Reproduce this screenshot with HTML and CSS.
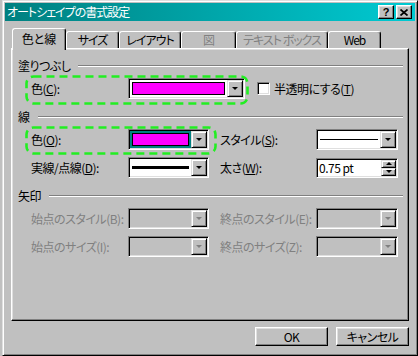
FILE: index.html
```html
<!DOCTYPE html>
<html lang="ja">
<head>
  <meta charset="UTF-8">
  <title>オートシェイプの書式設定</title>
  <link rel="stylesheet" href="styles.css">
</head>
<body>
  <div class="window">
    <div class="titlebar">
      <span class="title">オートシェイプの書式設定</span>
      <span class="cap-btn">?</span>
      <span class="cap-btn">
        <svg width="8" height="7" viewBox="0 0 8 7"><path d="M0.5 0.5L7.5 6.5M7.5 0.5L0.5 6.5" stroke="#000" stroke-width="1.7"/></svg>
      </span>
    </div>

    <div class="tabs">
      <div class="tab active">色と線</div>
      <div class="tab">サイズ</div>
      <div class="tab">レイアウト</div>
      <div class="tab off">図</div>
      <div class="tab off">テキスト ボックス</div>
      <div class="tab">Web</div>
    </div>

    <div class="panel">
      <div class="group-head"><span>塗りつぶし</span><i class="etch"></i></div>
      <div class="row">
        <div class="hl hl-fill">
          <svg class="hl-box"><rect/></svg>
          <span class="lbl">色(<u>C</u>):</span>
          <div class="combo combo-wide">
            <div class="combo-val"><span class="swatch"></span></div>
            <span class="drop"><i class="tri"></i></span>
          </div>
        </div>
        <span class="check"></span>
        <span>半透明にする(<u>T</u>)</span>
      </div>

      <div class="group-head"><span>線</span><i class="etch"></i></div>
      <div class="row">
        <div class="hl hl-line">
          <svg class="hl-box"><rect/></svg>
          <span class="lbl">色(<u>O</u>):</span>
          <div class="combo">
            <div class="combo-val focused"><span class="swatch"></span></div>
            <span class="drop"><i class="tri"></i></span>
          </div>
        </div>
        <span class="lbl lbl-2">スタイル(<u>S</u>):</span>
        <div class="combo combo-2">
          <div class="combo-val"><span class="stroke thin"></span></div>
          <span class="drop"><i class="tri"></i></span>
        </div>
      </div>
      <div class="row">
        <span class="lbl">実線/点線(<u>D</u>):</span>
        <div class="combo">
          <div class="combo-val"><span class="stroke thick"></span></div>
          <span class="drop"><i class="tri"></i></span>
        </div>
        <span class="lbl lbl-2">太さ(<u>W</u>):</span>
        <div class="spin">
          <div class="spin-val">0.75 pt</div>
          <div class="spin-btns">
            <span><i class="tri up"></i></span>
            <span><i class="tri"></i></span>
          </div>
        </div>
      </div>

      <div class="group-head"><span>矢印</span><i class="etch"></i></div>
      <div class="row disabled">
        <span class="lbl">始点のスタイル(B):</span>
        <div class="combo">
          <div class="combo-val"></div>
          <span class="drop"><i class="tri"></i></span>
        </div>
        <span class="lbl lbl-2">終点のスタイル(E):</span>
        <div class="combo combo-2">
          <div class="combo-val"></div>
          <span class="drop"><i class="tri"></i></span>
        </div>
      </div>
      <div class="row disabled">
        <span class="lbl">始点のサイズ(I):</span>
        <div class="combo">
          <div class="combo-val"></div>
          <span class="drop"><i class="tri"></i></span>
        </div>
        <span class="lbl lbl-2">終点のサイズ(Z):</span>
        <div class="combo combo-2">
          <div class="combo-val"></div>
          <span class="drop"><i class="tri"></i></span>
        </div>
      </div>
    </div>

    <div class="actions">
      <span class="btn">OK</span>
      <span class="btn">キャンセル</span>
    </div>
  </div>
</body>
</html>
```

FILE: styles.css
```css
body { margin: 0; background: #c0c0c0; color: #000; font-family: "Noto Sans CJK JP", "Liberation Sans", sans-serif; font-size: 12px; line-height: 12px; font-feature-settings: "palt"; letter-spacing: -0.5px;}
u { text-underline-offset: 1px;}

.window { box-sizing: border-box; width: 416px; height: 356px; margin-left: 2px; padding: 2px; background: #c0c0c0; border: 1px solid; border-color: #dfdfdf #000 #000 #dfdfdf; box-shadow: inset 1px 1px #fff, inset -1px -1px #808080;}

.titlebar { display: flex; align-items: center; height: 18px; padding: 0 3px 0 1px; background: linear-gradient(90deg, #008080, #00cad2); color: #fff;}
.title { flex: 1; padding-left: 1px; letter-spacing: -1px;}
.cap-btn { box-sizing: border-box; width: 16px; height: 14px; display: flex; align-items: center; justify-content: center; background: #c0c0c0; border: 1px solid; border-color: #fff #000 #000 #fff; box-shadow: inset -1px -1px #808080, inset 1px 1px #dfdfdf; color: #000; font: bold 11px/11px "Liberation Sans", sans-serif; letter-spacing: 0;}
.cap-btn + .cap-btn { margin-left: 2px;}

.tabs { display: flex; height: 20px; margin-top: 7px; padding-left: 7px;}
.tab { box-sizing: border-box; height: 17px; margin-top: 3px; padding-top: 2px; text-align: center; white-space: nowrap; letter-spacing: -1px; border: 1px solid; border-bottom: 0; border-color: #fff #000 #000 #fff; border-radius: 3px 3px 0 0; box-shadow: inset -1px 0 #808080;}
.tab.active { height: 22px; margin-top: 0; padding-top: 4px; position: relative; z-index: 1; background: #c0c0c0; letter-spacing: 0;}
.tab.off { color: #808080;}
.tab:nth-child(1) { width: 54px;}
.tab:nth-child(2) { width: 53px;}
.tab:nth-child(3) { width: 62px;}
.tab:nth-child(4) { width: 55px;}
.tab:nth-child(5) { width: 92px;}
.tab:nth-child(6) { width: 53px;}

.panel { box-sizing: border-box; height: 273px; margin: 0 6px; padding: 10px 5px 0 6px; border: 1px solid; border-color: #fff #000 #000 #fff; box-shadow: inset -1px -1px #808080, inset 1px 1px #dfdfdf;}
.group-head { display: flex; align-items: center; gap: 8px; height: 14px;}
.etch { flex: 1; height: 0; border-top: 1px solid #808080; border-bottom: 1px solid #fff;}
.row { display: flex; align-items: center; height: 21px; padding-left: 13px;}
.group-head + .row { margin-top: 5px;}
.row + .row { margin-top: 7px;}
.row + .group-head { margin-top: 11px;}
.lbl { width: 97px; white-space: nowrap;}
.lbl-2 { width: 96px; margin-left: 11px;}
.disabled { color: #808080;}

.hl { display: flex; align-items: center; height: 100%; position: relative;}
.hl-box { position: absolute; overflow: visible; pointer-events: none;}
.hl-box rect { x: 1.5px; y: 1.5px; width: calc(100% - 3px); height: calc(100% - 3px); rx: 7px; fill: none; stroke: #22ee22; stroke-width: 2.6; stroke-dasharray: 8 5;}
.hl-fill .hl-box { left: -6px; top: -3px; width: calc(100% + 10px); height: calc(100% + 9px);}
.hl-line .hl-box { left: -6px; top: -3px; width: calc(100% + 14px); height: calc(100% + 8px);}

.combo { box-sizing: border-box; display: flex; width: 81px; height: 100%; padding: 1px; border: 1px solid; border-color: #808080 #fff #fff #808080; box-shadow: inset 1px 1px #000, inset -1px -1px #dfdfdf;}
.combo-wide { width: 117px;}
.combo-2 { width: 82px;}
.combo-val { flex: 1; display: flex; align-items: center; background: #fff;}
.combo-val.focused { background: #008080;}
.disabled .combo-val { background: #c0c0c0;}
.swatch { align-self: stretch; flex: 1; margin: 2px; border: 1px solid #000; background: #ff00ff;}
.stroke { flex: 1; margin: 0 2px 0 2px; background: #000;}
.stroke.thin { height: 1px;}
.stroke.thick { height: 3px;}

.drop { box-sizing: border-box; width: 16px; display: flex; align-items: center; justify-content: center; background: #c0c0c0; border: 1px solid; border-color: #dfdfdf #000 #000 #dfdfdf; box-shadow: inset 1px 1px #fff, inset -1px -1px #808080;}
.tri { width: 0; height: 0; border-left: 3px solid transparent; border-right: 3px solid transparent; border-top: 3px solid #000;}
.tri.up { border-top: 0; border-bottom: 3px solid #000;}
.disabled .tri { border-top-color: #808080;}

.check { box-sizing: border-box; width: 13px; height: 13px; margin: 0 4px 0 12px; background: #fff; border: 1px solid; border-color: #808080 #fff #fff #808080; box-shadow: inset 1px 1px #000, inset -1px -1px #dfdfdf;}

.spin { box-sizing: border-box; display: flex; width: 82px; height: 20px; padding: 1px; border: 1px solid; border-color: #808080 #fff #fff #808080; box-shadow: inset 1px 1px #000, inset -1px -1px #dfdfdf;}
.spin-val { flex: 1; display: flex; align-items: center; padding-left: 1px; background: #fff;}
.spin-btns { display: flex; flex-direction: column; width: 15px;}
.spin-btns span { box-sizing: border-box; flex: 1; display: flex; align-items: center; justify-content: center; background: #c0c0c0; border: 1px solid; border-color: #dfdfdf #000 #000 #dfdfdf; box-shadow: inset 1px 1px #fff, inset -1px -1px #808080;}

.actions { display: flex; justify-content: flex-end; gap: 8px; margin: 6px 6px 0 0;}
.btn { box-sizing: border-box; width: 73px; height: 19px; display: flex; align-items: center; justify-content: center; background: #c0c0c0; border: 1px solid; border-color: #fff #000 #000 #fff; box-shadow: inset -1px -1px #808080, inset 1px 1px #dfdfdf;}
```
